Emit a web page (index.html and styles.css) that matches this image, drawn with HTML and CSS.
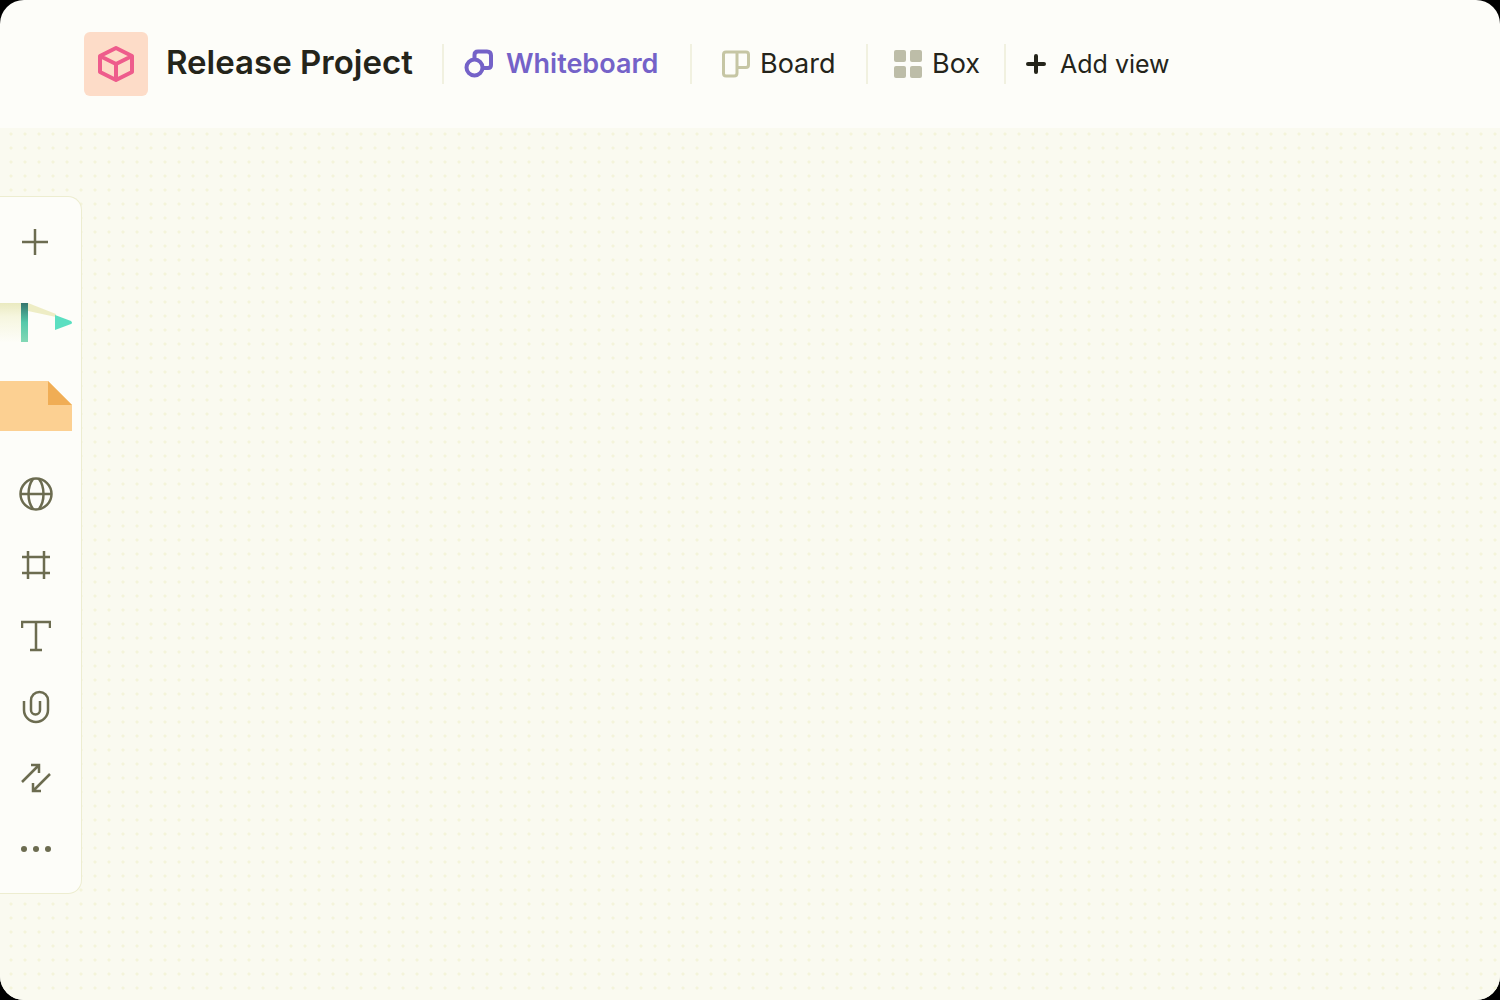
FILE: index.html
```html
<!DOCTYPE html>
<html lang="en">
<head>
<meta charset="utf-8">
<meta name="viewport" content="width=device-width, initial-scale=1">
<title>Release Project</title>
<link rel="stylesheet" href="styles.css">
</head>
<body>
<div class="app">
  <header class="header">
    <div class="project">
      <span class="project-badge">
        <svg width="36" height="38" viewBox="0 0 36 38" fill="none" stroke="#ee5c8c" stroke-width="4" stroke-linejoin="round"><path d="M18 3 34 11V27L18 35 2 27V11ZM2 11 18 19 34 11M18 19V35"/></svg>
      </span>
      <h1 class="project-name">Release Project</h1>
    </div>
    <nav class="views" aria-label="Views">
      <button class="view view-whiteboard" type="button">
        <svg width="30" height="30" viewBox="0 0 30 30" fill="none" stroke="#7462c8" stroke-width="4"><circle cx="10.500" cy="18.500" r="8"/><path d="M10.500 10V6Q10.500 2.500 14 2.500H23Q27 2.500 27 6.500V16Q27 19 24 19H19"/></svg>
        <span>Whiteboard</span>
      </button>
      <button class="view view-board" type="button">
        <svg width="28" height="28" viewBox="0 0 28 28" fill="none" stroke="#c6c6a4" stroke-width="3"><path d="M4 2H24Q26.500 2 26.500 4.500V15Q26.500 17.500 24 17.500H15V23Q15 26 12 26H4Q1.500 26 1.500 23.500V4.500Q1.500 2 4 2ZM15 2V18"/></svg>
        <span>Board</span>
      </button>
      <button class="view view-box" type="button">
        <svg width="28" height="28" viewBox="0 0 28 28" fill="#bdbda8"><rect width="12" height="12" rx="2"/><rect x="16" width="12" height="12" rx="2"/><rect y="16" width="12" height="12" rx="2"/><rect x="16" y="16" width="12" height="12" rx="2"/></svg>
        <span>Box</span>
      </button>
      <button class="view view-add" type="button">
        <svg width="20" height="20" viewBox="0 0 20 20" fill="none" stroke="#24241a" stroke-width="4" stroke-linecap="round"><path d="M10 2V18M2 10H18"/></svg>
        <span>Add view</span>
      </button>
    </nav>
  </header>
  <main class="canvas">
    <div class="toolbar" role="toolbar" aria-label="Whiteboard tools">
      <button class="tool" type="button" aria-label="Add">
        <svg width="30" height="28" viewBox="0 0 30 28"><path d="M14 1V27M1 14H27"/></svg>
      </button>
      <button class="tool tool-pen" type="button" aria-label="Pen">
        <svg width="72" height="40" viewBox="0 0 72 40">
          <defs>
            <linearGradient id="body" x1="0" y1="0" x2="0" y2="1"><stop offset="0" stop-color="#eaeac0"/><stop offset=".35" stop-color="#f6f6df"/><stop offset="1" stop-color="#fdfdf8"/></linearGradient>
            <linearGradient id="band" x1="0" y1="0" x2="0" y2="1"><stop offset="0" stop-color="#35756d"/><stop offset=".5" stop-color="#55c9aa"/><stop offset="1" stop-color="#83d8b5"/></linearGradient>
          </defs>
          <path d="M0 0H21V39H0Z" fill="url(#body)"/>
          <path d="M28 0 56 11V14L28 8Z" fill="#eeedc5"/>
          <path d="M21 0H28V39H21Z" fill="url(#band)"/>
          <path d="M55 12 71 18Q73 20 71 21L55 27Z" fill="#5bdfc1"/>
        </svg>
      </button>
      <button class="tool tool-note" type="button" aria-label="Sticky note">
        <svg width="72" height="50" viewBox="0 0 72 50"><path d="M0 0H48L72 24V50H0Z" fill="#fcd092"/><path d="M48 0 72 24H48Z" fill="#f0ad55"/></svg>
      </button>
      <button class="tool" type="button" aria-label="Web page">
        <svg width="34" height="34" viewBox="0 0 34 34"><circle cx="17" cy="17" r="15.500"/><path d="M1 17H33M14 2C8 10 8 24 14 32M20 2C26 10 26 24 20 32"/></svg>
      </button>
      <button class="tool" type="button" aria-label="Frame">
        <svg width="30" height="30" viewBox="0 0 30 30"><path d="M7 1V29M23 1V29M1 7H29M1 23H29"/></svg>
      </button>
      <button class="tool" type="button" aria-label="Text">
        <svg width="30" height="32" viewBox="0 0 30 32"><path d="M1 8V2H29V8M15 2V30M9 30H21"/></svg>
      </button>
      <button class="tool" type="button" aria-label="Attachment">
        <svg width="28" height="34" viewBox="0 0 28 34"><path d="M2 11V20A12 12 0 0 0 26 20V10.500A8.500 8.500 0 0 0 9 10.500V20A4.500 4.500 0 0 0 18 20V11"/></svg>
      </button>
      <button class="tool" type="button" aria-label="Connector">
        <svg width="30" height="30" viewBox="0 0 30 30"><path d="M1 19 18 2M10 2H18V10M29 11 12 28M12 20V28H20"/></svg>
      </button>
      <button class="tool" type="button" aria-label="More">
        <svg class="icon-more" width="30" height="8" viewBox="0 0 30 8"><circle cx="3" cy="4" r="3"/><circle cx="15" cy="4" r="3"/><circle cx="27" cy="4" r="3"/></svg>
      </button>
    </div>
  </main>
</div>
</body>
</html>
```
FILE: styles.css
```css
* {
  box-sizing: border-box;
}

body {
  margin: 0;
  background: #000;
  color: #24241a;
  font-family: Inter, "Liberation Sans", sans-serif;
}

button {
  padding: 0;
  border: 0;
  background: none;
  color: inherit;
  font: inherit;
}

svg {
  display: block;
  flex: none;
}

.app {
  display: flex;
  flex-direction: column;
  min-height: 100vh;
  overflow: hidden;
  border-radius: 24px;
  background: #fdfdf9;
}

.header {
  display: flex;
  align-items: center;
  height: 128px;
  padding-left: 84px;
}

.project {
  display: flex;
  align-items: center;
  gap: 18px;
  width: 358px;
}

.project-badge {
  display: flex;
  align-items: center;
  justify-content: center;
  width: 64px;
  height: 64px;
  border-radius: 6px;
  background: #fddcc8;
}

.project-name {
  margin: 0;
  padding-bottom: 4px;
  font-size: 33px;
  font-weight: 600;
  line-height: 40px;
  white-space: nowrap;
}

.views {
  display: flex;
}

.view {
  display: flex;
  align-items: center;
  height: 40px;
  border-left: 2px solid #f1f1e0;
  font-size: 27px;
  line-height: 32px;
  white-space: nowrap;
}

.view-whiteboard {
  gap: 12px;
  width: 248px;
  padding-left: 20px;
  color: #7462c8;
  font-weight: 600;
}

.view-board {
  gap: 10px;
  width: 176px;
  padding-left: 30px;
}

.view-box {
  gap: 10px;
  width: 138px;
  padding-left: 26px;
}

.view-add {
  gap: 14px;
  padding-left: 20px;
  font-size: 25px;
}

.canvas {
  flex: 1;
  padding: 68px 0 104px;
  background: radial-gradient(circle at 11px 6px, #f4f4da 1px, transparent 2px) 0 0 / 14px 14px #fafaf0;
}

.toolbar {
  display: flex;
  flex-direction: column;
  width: 82px;
  padding: 9px 0;
  border: 1px solid #ededd0;
  border-left: 0;
  border-radius: 0 14px 14px 0;
  background: #fdfdf9;
}

.tool {
  display: flex;
  align-items: center;
  justify-content: center;
  width: 72px;
  height: 71px;
  fill: none;
  stroke: #6c6c50;
  stroke-width: 2.5;
}

.tool-pen {
  height: 92px;
  stroke: none;
}

.tool-note {
  height: 74px;
  margin-bottom: 15px;
  stroke: none;
}

.icon-more {
  fill: #6c6c50;
  stroke: none;
}
```
